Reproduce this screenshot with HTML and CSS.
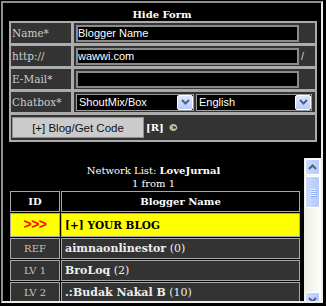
FILE: index.html
```html
<!DOCTYPE html>
<html lang="en">
<head>
    <meta charset="UTF-8">
    <title>Hide Form</title>
    <link rel="stylesheet" href="styles.css">
</head>
<body>
    <div class="frame">
        <div class="form-title">Hide Form</div>
        <table class="form-table">
            <tr>
                <td class="lbl">Name*</td>
                <td class="fld"><div class="fld-inner"><input class="txt" type="text" value="Blogger Name"></div></td>
            </tr>
            <tr>
                <td class="lbl">http://</td>
                <td class="fld"><div class="fld-inner"><input class="txt" type="text" value="wawwi.com"><span class="slash">/</span></div></td>
            </tr>
            <tr>
                <td class="lbl">E-Mail*</td>
                <td class="fld"><div class="fld-inner"><input class="txt" type="text" value=""></div></td>
            </tr>
            <tr>
                <td class="lbl">Chatbox*</td>
                <td class="fld">
                    <div class="fld-inner sel-row">
                        <div class="sel sel-chat">
                            <select><option>ShoutMix/Box</option></select>
                            <span class="sel-arrow"><svg width="9" height="6" viewBox="0 0 9 6"><polyline points="1,1 4.5,4.5 8,1" fill="none" stroke="#4d6185" stroke-width="2"/></svg></span>
                        </div>
                        <div class="sel sel-lang">
                            <select><option>English</option></select>
                            <span class="sel-arrow"><svg width="9" height="6" viewBox="0 0 9 6"><polyline points="1,1 4.5,4.5 8,1" fill="none" stroke="#4d6185" stroke-width="2"/></svg></span>
                        </div>
                    </div>
                </td>
            </tr>
            <tr>
                <td class="actions" colspan="2">
                    <div class="actions-inner">
                        <button class="get-code">[+] Blog/Get Code</button>
                        <span class="marks">[R] &copy;</span>
                    </div>
                </td>
            </tr>
        </table>

        <div class="network">
            <div class="network-body">
                <div class="net-title">Network List: <b>LoveJurnal</b></div>
                <div class="net-title">1 from 1</div>
                <table class="list">
                    <tr class="head">
                        <td class="id">ID</td>
                        <td class="name">Blogger Name</td>
                    </tr>
                    <tr class="you">
                        <td class="id"><span class="arrows">&gt;&gt;&gt;</span></td>
                        <td class="name"><b>[+] YOUR BLOG</b></td>
                    </tr>
                    <tr>
                        <td class="id">REF</td>
                        <td class="name"><b>aimnaonlinestor</b> (0)</td>
                    </tr>
                    <tr>
                        <td class="id">LV 1</td>
                        <td class="name"><b>BroLoq</b> (2)</td>
                    </tr>
                    <tr>
                        <td class="id">LV 2</td>
                        <td class="name"><b>.:Budak Nakal B</b> (10)</td>
                    </tr>
                </table>
            </div>
            <div class="scrollbar">
                <div class="sb-btn"><svg width="9" height="6" viewBox="0 0 9 6"><polyline points="1,5 4.5,1.5 8,5" fill="none" stroke="#4d6185" stroke-width="2"/></svg></div>
                <div class="sb-thumb"><span></span><span></span><span></span><span></span></div>
                <div class="sb-track"></div>
                <div class="sb-btn"><svg width="9" height="6" viewBox="0 0 9 6"><polyline points="1,1 4.5,4.5 8,1" fill="none" stroke="#4d6185" stroke-width="2"/></svg></div>
            </div>
        </div>
    </div>
</body>
</html>
```

FILE: styles.css
```css
body {
    margin: 0;
    background-color: #000;
    font-family: "DejaVu Serif", Georgia, serif;
    font-size: 10px;
    color: #ccc;
}
.frame {
    box-sizing: border-box;
    width: 322px;
    height: 302px;
    margin: 1px 0 0 1px;
    border: 2px solid;
    border-color: #8f8f8f #ececec #ececec #8f8f8f;
    padding-top: 6px;
    overflow: hidden;
}
.form-title {
    text-align: center;
    font-weight: bold;
    color: #fff;
    line-height: 12px;
}
.form-table {
    margin-left: 6px;
    width: 308px;
    border-spacing: 1px;
    background-color: #ababab;
}
.form-table td {
    background-color: #333;
    border: 1px solid #ababab;
    padding: 0;
}
.lbl {
    width: 59px;
    padding-left: 1px !important;
    line-height: 20px;
    font-size: 10.5px;
}
.fld-inner {
    display: flex;
    align-items: center;
    height: 20px;
}
.txt {
    box-sizing: border-box;
    width: 223px;
    height: 17px;
    margin: 0 0 0 2px;
    padding: 0;
    border: 2px solid #8a8a8a;
    background-color: #000;
    color: #fff;
    font-family: "Liberation Sans", Tahoma, sans-serif;
    font-size: 11px;
}
.slash {
    margin-left: 2px;
    color: #ccc;
    font-family: "Liberation Sans", Tahoma, sans-serif;
    font-size: 11px;
}
.sel-row {
    gap: 2px;
    padding-left: 2px;
}
.sel {
    box-sizing: border-box;
    display: flex;
    align-items: center;
    height: 17px;
    border: 1px solid #9a9a9a;
    background-color: #000;
    padding: 0 0 0 2px;
}
.sel-chat {
    width: 118px;
}
.sel-lang {
    width: 116px;
}
.sel select {
    appearance: none;
    flex: 1;
    min-width: 0;
    height: 15px;
    margin: 0;
    padding: 0;
    border: none;
    background: transparent;
    color: #fff;
    font-family: "Liberation Sans", Tahoma, sans-serif;
    font-size: 11px;
}
.sel-arrow {
    box-sizing: border-box;
    display: flex;
    align-items: center;
    justify-content: center;
    width: 16px;
    height: 15px;
    border: 1px solid #fff;
    border-radius: 2px;
    background: linear-gradient(#dce7fd, #b9cdf8);
}
.actions-inner {
    display: flex;
    align-items: center;
    height: 25px;
}
.get-code {
    width: 132px;
    height: 21px;
    margin-left: 1px;
    padding: 0;
    border: 1px solid #8e8e8e;
    background-color: #cbcbcb;
    color: #111;
    font-family: "Liberation Sans", Tahoma, sans-serif;
    font-size: 11.5px;
}
.marks {
    margin-left: 2px;
    font-weight: bold;
    color: #fff;
    word-spacing: 1px;
}
.network {
    display: flex;
    height: 150px;
    margin-top: 16px;
}
.network-body {
    flex: 1;
    padding-top: 6px;
}
.net-title {
    text-align: center;
    line-height: 13px;
    color: #fff;
}
.list {
    margin-left: 6px;
    width: 292px;
    border-spacing: 1px;
}
.list td {
    border: 1px solid #a8a8a8;
    background-color: #333;
    line-height: 19px;
    padding: 0 3px;
    color: #eee;
}
.list .name {
    font-size: 11px;
}
.list .id {
    width: 42px;
    text-align: center;
    color: #c4c4c4;
}
.list .head td {
    background-color: #000;
    font-size: 10px;
    font-weight: bold;
    text-align: center;
    color: #fff;
}
.list .you td {
    background-color: #ff0;
    color: #000;
    line-height: 20px;
}
.list .you .name {
    font-size: 10.5px;
}
.arrows {
    color: #f00;
    font-family: "Liberation Sans", Arial, sans-serif;
    font-weight: bold;
    font-size: 14px;
    letter-spacing: -0.5px;
}
.scrollbar {
    display: flex;
    flex-direction: column;
    width: 17px;
    padding-top: 1px;
    background: linear-gradient(90deg, #eeede5, #fdfdfa);
}
.sb-btn {
    box-sizing: border-box;
    display: flex;
    align-items: center;
    justify-content: center;
    height: 16px;
    margin: 0 1px;
    border: 1px solid #fff;
    border-radius: 2px;
    background: linear-gradient(90deg, #cad9fd, #b6cbf8);
}
.sb-thumb {
    box-sizing: border-box;
    display: flex;
    flex-direction: column;
    align-items: center;
    justify-content: center;
    gap: 1px;
    height: 32px;
    margin: 1px 1px 0;
    border: 1px solid #fff;
    border-radius: 2px;
    background: linear-gradient(90deg, #cad9fd, #b6cbf8);
}
.sb-thumb span {
    width: 6px;
    height: 1px;
    background-color: #eef4fe;
    box-shadow: 1px 1px 0 #8cb0f8;
}
.sb-track {
    flex: 1;
}
```
